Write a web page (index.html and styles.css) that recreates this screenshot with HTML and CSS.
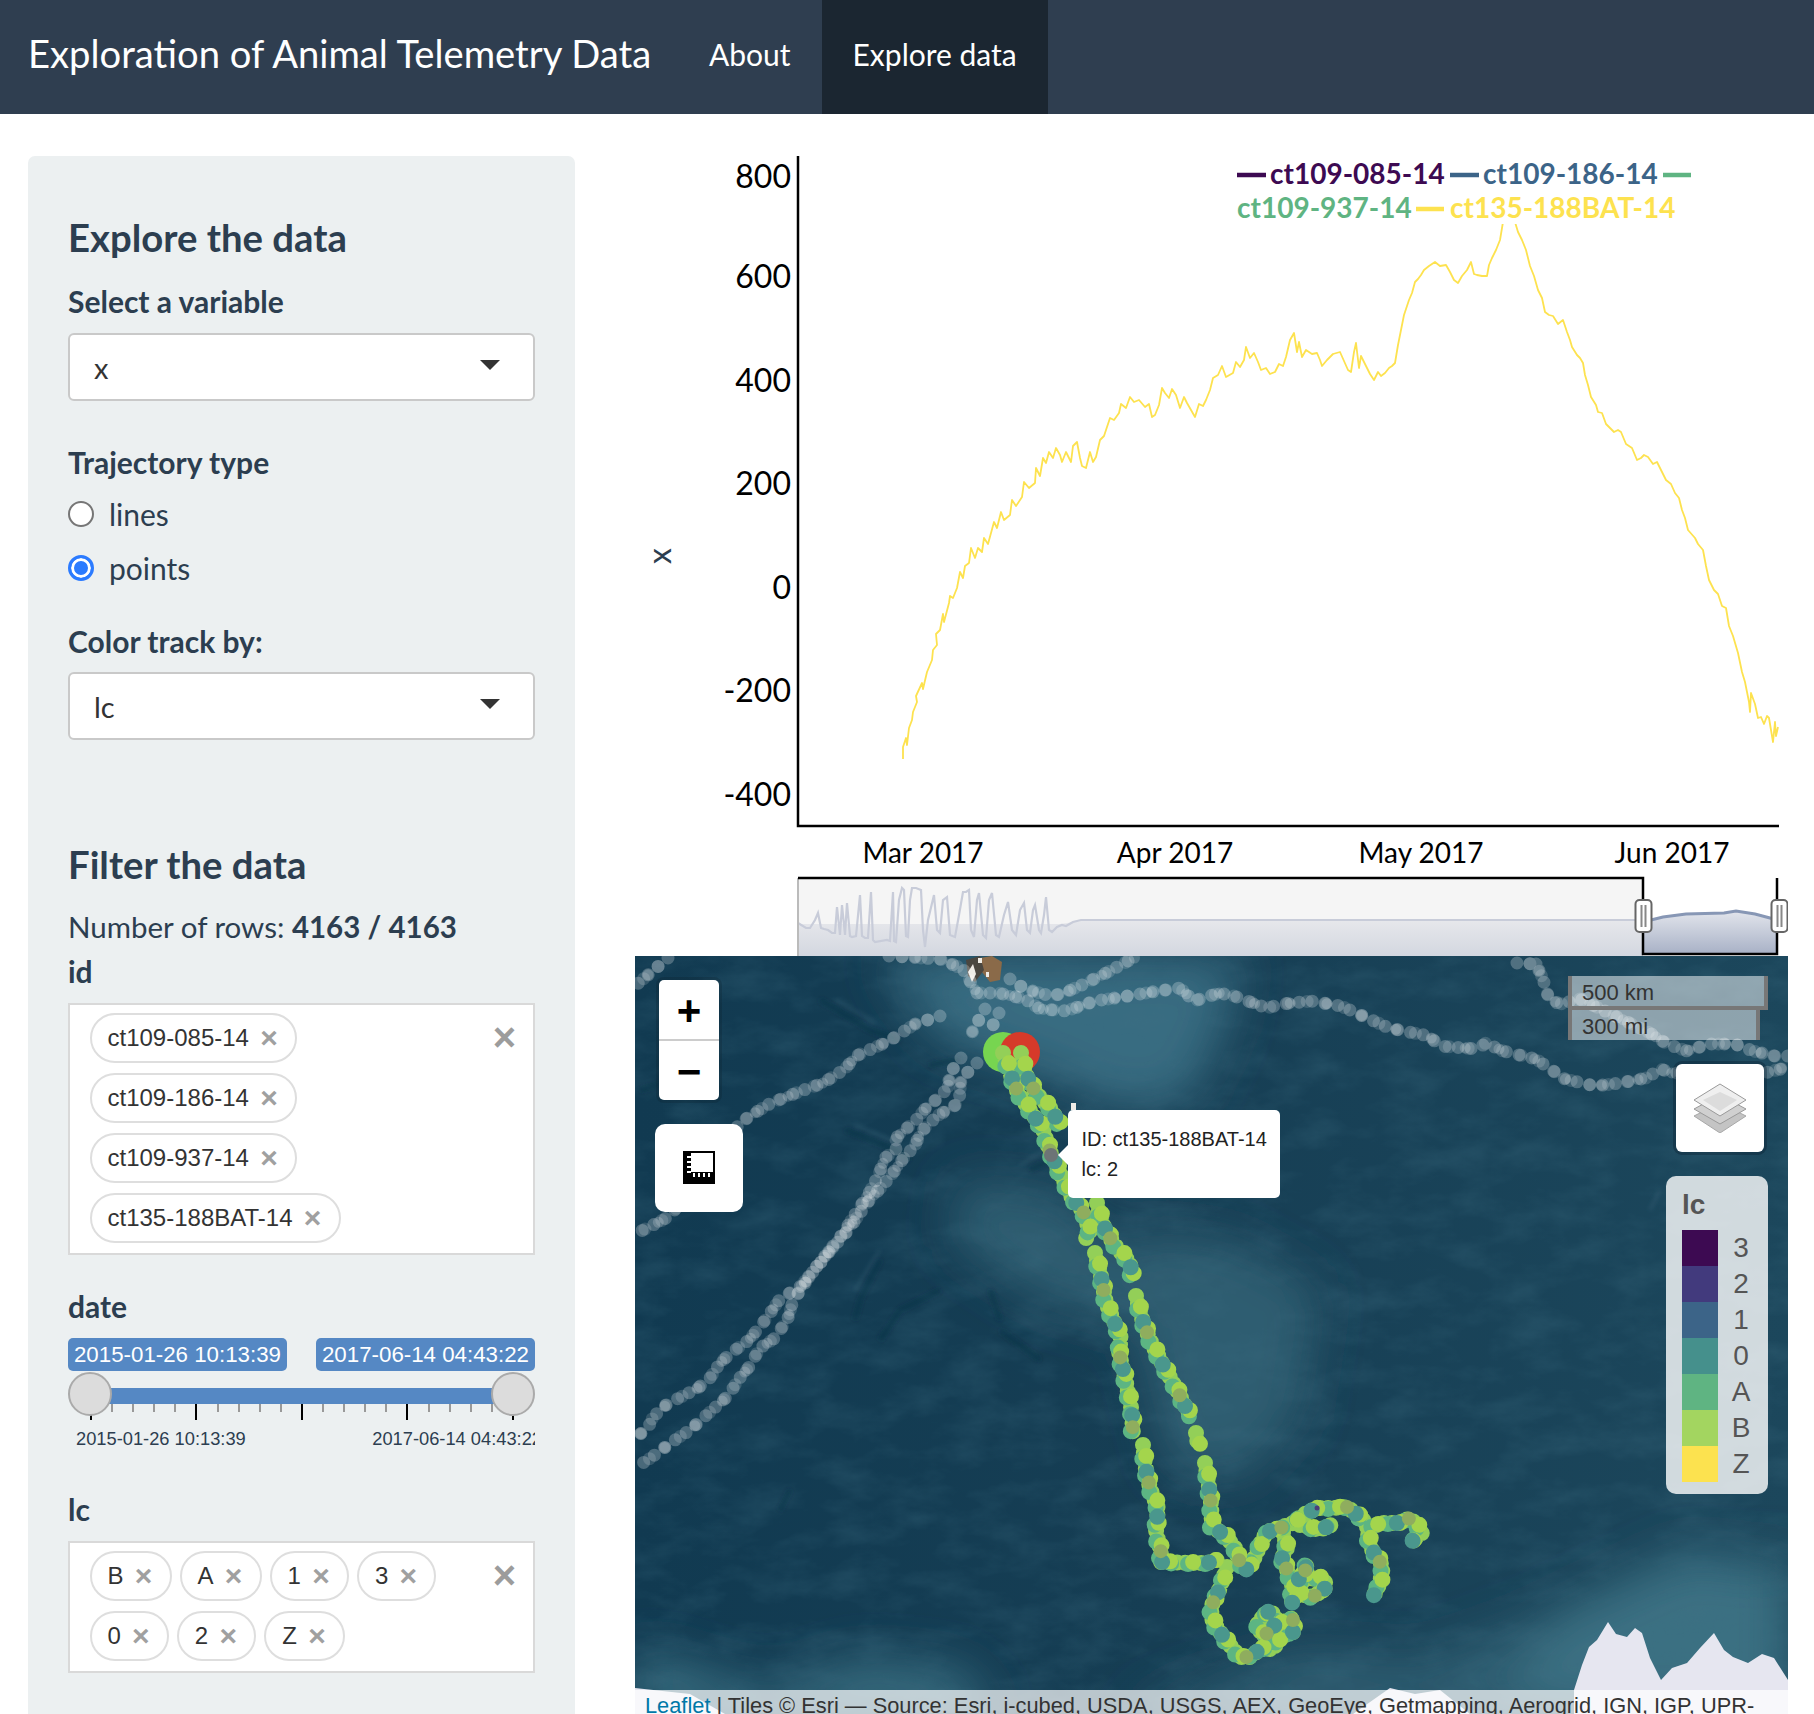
FILE: index.html
```html
<!DOCTYPE html>
<html lang="en">
<head>
<meta charset="utf-8">
<title>Exploration of Animal Telemetry Data</title>
<link rel="stylesheet" href="styles.css">
</head>
<body>
<nav class="navbar">
  <span class="brand">Exploration of Animal Telemetry Data</span>
  <a class="tab">About</a>
  <a class="tab tab-active">Explore data</a>
</nav>
<div class="content">
  <aside class="sidebar">
    <h3 class="heading">Explore the data</h3>
    <label class="label label-select">Select a variable</label>
    <div class="select"><span>x</span><i class="caret"></i></div>
    <label class="label label-traj">Trajectory type</label>
    <div class="radio radio-first"><i class="dot"></i><span>lines</span></div>
    <div class="radio"><i class="dot dot-on"></i><span>points</span></div>
    <label class="label label-color">Color track by:</label>
    <div class="select"><span>lc</span><i class="caret"></i></div>
    <h3 class="heading heading-filter">Filter the data</h3>
    <p class="rows">Number of rows: <b>4163 / 4163</b></p>
    <label class="label label-id">id</label>
    <div class="multi">
      <span class="pill">ct109-085-14<i class="pill-x">×</i></span>
      <span class="pill">ct109-186-14<i class="pill-x">×</i></span>
      <span class="pill">ct109-937-14<i class="pill-x">×</i></span>
      <span class="pill">ct135-188BAT-14<i class="pill-x">×</i></span>
      <i class="clear">×</i>
    </div>
    <label class="label label-date">date</label>
    <div class="slider">
      <div class="bubbles"><span class="bubble">2015-01-26 10:13:39</span><span class="bubble">2017-06-14 04:43:22</span></div>
      <div class="bar"></div>
      <i class="knob knob-left"></i><i class="knob knob-right"></i>
      <div class="ticks">
        <i class="tk tk-major"></i><i class="tk"></i><i class="tk"></i><i class="tk"></i><i class="tk"></i>
        <i class="tk tk-major"></i><i class="tk"></i><i class="tk"></i><i class="tk"></i><i class="tk"></i>
        <i class="tk tk-major"></i><i class="tk"></i><i class="tk"></i><i class="tk"></i><i class="tk"></i>
        <i class="tk tk-major"></i><i class="tk"></i><i class="tk"></i><i class="tk"></i><i class="tk"></i>
        <i class="tk tk-major"></i>
      </div>
      <div class="ends"><span>2015-01-26 10:13:39</span><span>2017-06-14 04:43:22</span></div>
    </div>
    <label class="label label-lc">lc</label>
    <div class="multi">
      <span class="pill">B<i class="pill-x">×</i></span>
      <span class="pill">A<i class="pill-x">×</i></span>
      <span class="pill">1<i class="pill-x">×</i></span>
      <span class="pill">3<i class="pill-x">×</i></span>
      <span class="pill">0<i class="pill-x">×</i></span>
      <span class="pill">2<i class="pill-x">×</i></span>
      <span class="pill">Z<i class="pill-x">×</i></span>
      <i class="clear">×</i>
    </div>
  </aside>

  <main class="main">
    <svg class="chart" viewBox="635 156 1153 800" xmlns="http://www.w3.org/2000/svg">
      <defs>
        <linearGradient id="fillOut" x1="0" y1="0" x2="0" y2="1"><stop offset="0" stop-color="#e6e7eb"/><stop offset="1" stop-color="#d3d7e0"/></linearGradient>
        <linearGradient id="fillIn" x1="0" y1="0" x2="0" y2="1"><stop offset="0" stop-color="#e2e5ec"/><stop offset="1" stop-color="#a8b1c6"/></linearGradient>
      </defs>
      <text class="ttl" transform="translate(671 556) rotate(-90)">x</text>
      <g class="ytick">
        <text x="791" y="188">800</text><text x="791" y="288">600</text><text x="791" y="392">400</text><text x="791" y="495">200</text><text x="791" y="599">0</text><text x="791" y="702">-200</text><text x="791" y="806">-400</text>
      </g>
      <g class="xtick">
        <text x="923" y="863">Mar 2017</text><text x="1175" y="863">Apr 2017</text><text x="1421" y="863">May 2017</text><text x="1672" y="863">Jun 2017</text>
      </g>
      <path class="axis" d="M798 156V826H1779"/>
      <polyline class="line" points="903,759 903,747 906,738 907,745 909,728 912,720 913,712 917,702 916,696 922,683 923,689 927,672 932,660 933,650 937,645 936,634 940,630 943,614 944,622 949,603 950,596 953,598 957,588 960,572 963,578 965,566 969,563 971,548 975,558 978,548 982,552 984,538 988,544 991,533 994,522 997,528 1001,512 1004,520 1010,515 1012,500 1016,506 1022,497 1024,482 1029,488 1035,483 1036,468 1040,476 1043,458 1046,463 1049,452 1053,458 1056,448 1060,455 1062,462 1066,452 1071,462 1073,446 1077,442 1080,458 1082,466 1086,468 1090,452 1093,462 1096,457 1100,440 1104,436 1107,427 1110,418 1114,420 1119,413 1121,404 1126,408 1130,397 1134,402 1139,400 1145,407 1149,404 1152,417 1155,415 1159,405 1162,388 1165,393 1169,398 1172,389 1176,395 1180,408 1184,397 1187,403 1191,410 1195,417 1199,404 1203,406 1206,400 1210,390 1213,378 1218,375 1222,366 1226,377 1233,373 1236,362 1240,367 1244,360 1246,347 1250,358 1254,353 1258,362 1261,370 1266,368 1270,374 1275,372 1279,364 1283,366 1286,357 1290,340 1294,333 1297,352 1299,342 1302,357 1306,350 1312,354 1317,353 1320,360 1322,366 1327,360 1333,354 1340,352 1344,361 1348,370 1351,372 1354,352 1356,343 1359,368 1361,356 1366,366 1370,374 1374,380 1378,372 1381,376 1385,373 1389,368 1392,366 1395,363 1398,345 1401,330 1404,315 1409,300 1412,293 1415,282 1418,279 1421,275 1424,270 1429,266 1435,262 1440,266 1446,265 1450,272 1454,280 1458,283 1462,276 1467,270 1471,262 1474,274 1477,275 1482,276 1487,276 1489,265 1492,258 1496,250 1500,240 1502,228 1503,222 1515,222 1518,232 1522,240 1526,250 1530,266 1534,276 1538,290 1542,298 1545,312 1549,315 1553,316 1558,324 1563,320 1567,332 1570,340 1572,347 1577,355 1580,358 1583,363 1585,375 1588,385 1591,397 1596,405 1598,412 1602,413 1606,424 1610,428 1614,432 1618,430 1621,432 1626,444 1632,448 1637,460 1641,458 1644,455 1648,457 1653,464 1657,462 1660,468 1666,480 1671,484 1675,493 1679,498 1682,510 1685,518 1688,530 1695,538 1698,544 1703,550 1706,566 1709,580 1714,590 1718,594 1722,606 1726,608 1729,626 1733,636 1738,653 1742,672 1745,682 1749,702 1750,712 1751,693 1755,704 1758,718 1761,717 1764,724 1767,716 1769,718 1771,730 1773,742 1775,722 1776,736 1778,727"/>
      <rect class="lgbg" x="1232" y="156" width="470" height="68"/>
      <g class="lg">
        <path class="lg1" d="M1237 175H1266"/><text class="lg1t" x="1270" y="184">ct109-085-14</text>
        <path class="lg2" d="M1450 175H1479"/><text class="lg2t" x="1483" y="184">ct109-186-14</text>
        <path class="lg3" d="M1663 175H1691"/><text class="lg3t" x="1237" y="218">ct109-937-14</text>
        <path class="lg4" d="M1416 209H1444"/><text class="lg4t" x="1450" y="218">ct135-188BAT-14</text>
      </g>
      <rect class="rs-bg" x="798" y="878" width="845" height="78"/>
      <rect class="rs-in" x="1643" y="878" width="134" height="76"/>
      <path class="rs-fill" d="M798 924L1060 924 1081 921H1643V956H798Z"/>
      <path class="rs-line" d="M798 923L806 928 810 928 815 920 818 913 821 928 824 929 828 930 832 933 835 933 837 907 840 935 842 905 845 935 847 903 850 936 852 937 856 936 860 895 862 936 865 938 868 938 871 892 873 940 875 942 887 940 890 941 893 892 894 941 896 942 899 900 902 888 904 890 906 936 908 937 910 900 912 888 916 888 921 890 923 930 925 947 928 920 934 895 937 930 940 933 943 900 947 897 950 935 955 937 959 915 963 892 966 892 969 890 971 930 974 937 977 900 979 893 983 935 986 938 989 900 992 893 996 935 999 937 1004 915 1008 902 1012 930 1016 935 1020 910 1024 903 1027 930 1030 933 1033 910 1035 905 1039 930 1041 933 1044 915 1046 897 1049 930 1052 932 1057 927 1062 925 1066 926 1073 922 1081 920H1643"/>
      <path class="rs-fill2" d="M1643 922L1663 917 1686 914 1724 913 1736 911 1755 914 1770 918 1777 920V954H1643Z"/>
      <path class="rs-line2" d="M1643 922L1663 917 1686 914 1724 913 1736 911 1755 914 1770 918 1777 920"/>
      <path class="rs-edge" d="M798 878V956"/>
      <path class="rs-frame" d="M798 878H1643V954H1777V878"/>
      <g class="handle"><rect x="1635.500" y="900" width="16" height="32" rx="4"/><path d="M1641.500 905V927M1645.500 905V927"/></g>
      <g class="handle"><rect x="1771.500" y="900" width="16" height="32" rx="4"/><path d="M1777.500 905V927M1781.500 905V927"/></g>
    </svg>

    <div class="map">
      <svg class="map-art" viewBox="635 956 1153 758" preserveAspectRatio="none" xmlns="http://www.w3.org/2000/svg">
        <defs>
          <filter id="b30" x="-30%" y="-30%" width="160%" height="160%"><feGaussianBlur stdDeviation="24"/></filter>
          <filter id="b3" x="-30%" y="-30%" width="160%" height="160%"><feGaussianBlur stdDeviation="2"/></filter>
          <filter id="b1" x="-30%" y="-30%" width="160%" height="160%"><feGaussianBlur stdDeviation="0.600"/></filter>
          <filter id="grain" x="0" y="0" width="100%" height="100%">
            <feTurbulence type="fractalNoise" baseFrequency="0.018 0.035" numOctaves="5" seed="11"/>
            <feColorMatrix values="0 0 0 0 0.05  0 0 0 0 0.16  0 0 0 0 0.23  1.400 0 0 0 -0.56"/>
          </filter>
          <linearGradient id="sea" x1="0" y1="0" x2="1" y2="0"><stop offset="0" stop-color="#113a51"/><stop offset="0.45" stop-color="#163e54"/><stop offset="1" stop-color="#1c475c"/></linearGradient>
          <path id="w1" d="M668 958L635 986"/>
          <path id="w2" d="M940 1016L915 1024 889 1041 856 1056 845 1069 823 1083 801 1091 771 1103 753 1114 740 1123 720 1150 690 1190 670 1216 657 1223 635 1234"/>
          <path id="w3" d="M985 1009L970 1036M999 1013L990 1031M977 1063L961 1079 959 1103 937 1116 920 1133 915 1146 905 1156 896 1169 885 1183 867 1203 850 1228 830 1251 812 1273 793 1301 788 1318 775 1338 760 1348 749 1367 738 1380 729 1395 710 1412 690 1430 672 1442 652 1457 635 1468"/>
          <path id="w4" d="M961 1058L950 1073 948 1088 937 1099 926 1108 917 1119 896 1138 896 1149 885 1158 878 1176 869 1193 856 1213 841 1236 821 1261 801 1286 780 1299 766 1319 749 1340 731 1353 720 1363 710 1378 698 1388 675 1400 666 1405 653 1417 648 1428 635 1438"/>
          <path id="w5" d="M889 956L940 959 963 969 977 993 999 993 1025 999 1040 1009 1066 1011 1095 1001 1128 996 1158 991 1180 988 1194 1001 1219 993 1234 996 1267 1008 1282 1004 1311 1001 1341 1006 1363 1016 1389 1028 1429 1036 1440 1046 1477 1049 1486 1043 1503 1051 1536 1059 1565 1079 1595 1086 1620 1083 1646 1078 1661 1069 1672 1073 1764 1073 1781 1069 1788 1059"/>
          <path id="w6" d="M1010 979L1025 989 1051 996 1064 993 1084 984 1106 973 1128 961 1139 956"/>
          <path id="w7" d="M1517 963L1536 964 1543 979 1549 999 1560 1004 1580 999 1609 1013 1650 1033 1667 1044 1687 1051 1709 1044 1735 1044 1753 1051 1775 1056 1789 1056M1536 964L1545 957"/>
          <g id="whites"><use href="#w1"/><use href="#w2"/><use href="#w3"/><use href="#w4"/><use href="#w5"/><use href="#w6"/><use href="#w7"/></g>
          <path id="c1" d="M1003 1053L1010 1073 1018 1093 1029 1109 1043 1129 1049 1149 1058 1169 1071 1196 1084 1213 1090 1233 1084 1241M1095 1253L1101 1276 1106 1303 1113 1319 1121 1338 1119 1352 1125 1378 1132 1412 1133 1435M1143 1445L1145 1465 1150 1488 1158 1508 1156 1532 1161 1552 1161 1562 1191 1563 1207 1563 1217 1560"/>
          <path id="c2" d="M1021 1053L1025 1073 1036 1093 1051 1109 1062 1129M1097 1203L1102 1223 1113 1243 1130 1263 1132 1276M1136 1296L1141 1316 1150 1340 1163 1365 1176 1388 1187 1410 1193 1418M1196 1433L1198 1445M1205 1463L1208 1480 1211 1503 1212 1527 1225 1535 1235 1548 1240 1563 1247 1570 1255 1557 1262 1540 1267 1532 1280 1528 1293 1523 1303 1515 1317 1508 1333 1508 1347 1507 1360 1517 1370 1527 1383 1523 1400 1523 1410 1518 1423 1532 1410 1543"/>
          <path id="c3" d="M1367 1527L1370 1547 1377 1557 1383 1567 1380 1583 1373 1597M1283 1533L1287 1548 1282 1558 1287 1570 1292 1583 1292 1603 1303 1580 1307 1563 1303 1580 1323 1577 1327 1587 1313 1597 1295 1593 1300 1575M1300 1525L1320 1530 1333 1524M1227 1567L1220 1588 1212 1605 1211 1617 1217 1628 1228 1643 1240 1657 1250 1657 1263 1647 1273 1650 1280 1637 1293 1632 1293 1618 1280 1623 1270 1610 1257 1623 1263 1637 1275 1625 1268 1640"/>
          <g id="colors"><use href="#c1"/><use href="#c2"/><use href="#c3"/></g>
        </defs>
        <rect class="sea" x="635" y="956" width="1153" height="758"/>
        <g filter="url(#b30)">
          <path class="shoal" d="M880 956L1240 956 1225 1030 1190 1100 1120 1110 1030 1070 940 1040Z"/>
          <path class="shoal2" d="M960 1180L1060 1190 1130 1260 1140 1330 1040 1300 950 1240Z"/>
          <path class="shoal2" d="M1130 1230L1230 1240 1320 1290 1300 1420 1240 1480 1170 1470 1140 1350Z"/>
          <path class="shoal3" d="M635 1650L770 1690 860 1660 960 1670 1000 1714H635Z"/>
          <path class="shoal2" d="M1120 1714L1300 1650 1420 1660 1560 1610 1700 1580 1788 1550V1714Z"/>
          <path class="shoal3" d="M1500 1714L1560 1610 1690 1550 1788 1570V1714Z"/>
        </g>
        <rect class="grain" filter="url(#grain)" x="635" y="956" width="1153" height="758"/>
        <g class="ridges" filter="url(#b3)">
          <path d="M820 1000L870 1030 900 1040M846 1130L895 1150 910 1160M960 1060L930 1065M1030 1170L1050 1160M880 1260L860 1300 855 1320M940 1290L900 1310 880 1340M640 1090L690 1075M990 1290L1000 1320M1000 1330L1040 1360M790 1490L780 1510"/>
        </g>
        <g class="ridges-l" filter="url(#b3)">
          <path d="M835 1000L875 1022M855 1125L895 1142M1020 1165L1045 1150M880 1250L855 1290M1660 1190L1650 1210"/>
        </g>
        <g filter="url(#b1)">
          <path class="isle-b" d="M980 958L992 956 1002 962 1000 980 990 982 982 972Z"/>
          <path class="isle-d" d="M966 960L980 956 984 970 975 982 968 976Z"/>
          <path class="isle-w" d="M968 972L973 964 976 974 972 982Z"/>
          <path class="isle-w" d="M978 958h4v5h-4zM986 972h3v5h-3z"/>
          <path class="isle-w" d="M1071 1103h5v7h-5z"/>
        </g>
        <path class="land" d="M1574 1714V1690L1582 1665 1589 1647 1597 1640 1608 1622 1616 1634 1627 1637 1635 1628 1642 1633 1650 1658 1661 1680 1672 1668 1687 1663 1700 1648 1714 1633 1724 1650 1733 1657 1748 1663 1762 1654 1774 1658 1788 1680V1714Z"/>
        <path class="land" d="M635 1688L690 1694 725 1714H635ZM1353 1714L1390 1688 1415 1694 1440 1690 1470 1714Z"/>
        <g class="wt wt-a"><use href="#whites"/></g>
        <g class="wt wt-b"><use href="#whites"/></g>
        <g class="wt wt-c"><use href="#whites"/></g>
        <circle class="m-green" cx="1003" cy="1052" r="20"/>
        <circle class="m-red" cx="1020" cy="1052" r="20"/>
        <g class="ct ct-base"><use href="#colors"/></g>
        <g class="ct ct-teal"><use href="#colors"/></g>
        <g class="ct ct-lime"><use href="#colors"/></g>
        <g class="ct ct-deep"><use href="#colors"/></g>
        <g class="ct ct-olive"><use href="#colors"/></g>
        <g class="ct ct-purple"><use href="#c2"/></g>
        <circle class="m-hover" cx="1051" cy="1155" r="7"/>
      </svg>

      <div class="zoom"><span class="zoom-btn">+</span><span class="zoom-btn zoom-minus">−</span></div>
      <div class="measure">
        <svg class="measure-icon" viewBox="0 0 32 33" xmlns="http://www.w3.org/2000/svg">
          <path class="mi-solid" d="M0 0H8V21H32V33H0Z"/>
          <path class="mi-thin" d="M8 1H31V22"/>
          <path class="mi-tick" d="M4 6H8M4 11H8M4 16H8M4 21H8M11 26V22M16 26V22M21 26V22M26 26V22"/>
        </svg>
      </div>
      <div class="tip"><div>ID: ct135-188BAT-14</div><div>lc: 2</div></div>
      <div class="scale"><div class="scale-km">500 km</div><div class="scale-mi">300 mi</div></div>
      <div class="layers">
        <svg class="layers-icon" viewBox="0 0 54 50" xmlns="http://www.w3.org/2000/svg">
          <path class="ly3" d="M27 20L53 33 27 50 1 33Z"/>
          <path class="ly2" d="M27 12L53 26 27 41 1 26Z"/>
          <path class="ly1" d="M27 1L53 17 27 33 1 17Z"/>
          <path class="ly0" d="M27 9L44 17 27 28 10 17Z"/>
        </svg>
      </div>
      <div class="legend">
        <div class="legend-title">lc</div>
        <div class="legend-row"><i class="sw sw1"></i><span>3</span></div>
        <div class="legend-row"><i class="sw sw2"></i><span>2</span></div>
        <div class="legend-row"><i class="sw sw3"></i><span>1</span></div>
        <div class="legend-row"><i class="sw sw4"></i><span>0</span></div>
        <div class="legend-row"><i class="sw sw5"></i><span>A</span></div>
        <div class="legend-row"><i class="sw sw6"></i><span>B</span></div>
        <div class="legend-row"><i class="sw sw7"></i><span>Z</span></div>
      </div>
      <div class="attrib"><a>Leaflet</a> | Tiles © Esri — Source: Esri, i-cubed, USDA, USGS, AEX, GeoEye, Getmapping, Aerogrid, IGN, IGP, UPR-EGP, and the GIS User Community</div>
    </div>
  </main>
</div>
</body>
</html>
```

FILE: styles.css
```css
* { box-sizing: border-box; }
html, body { margin: 0; height: 1714px; overflow: hidden; background: #fff; }
body { font-family: Lato, "Liberation Sans", sans-serif; color: #2c3e50; font-size: 30px; }
i { font-style: normal; }

.navbar { height: 114px; background: #2f3e50; color: #fff; display: flex; align-items: stretch; padding-left: 28px; }
.brand { font-size: 38.200px; line-height: 106px; width: 650px; white-space: nowrap; }
.tab { font-size: 30px; line-height: 109px; padding: 0 31px; }
.tab-active { background: #1b2631; }

.content { display: flex; height: 1600px; }
.sidebar { width: 547px; margin: 42px 0 0 28px; padding: 59px 40px 0; height: 1600px; background: #ecf0f1; border-radius: 7px 7px 0 0; }
.main { width: 1153px; margin: 42px 0 0 60px; display: flex; flex-direction: column; }

.heading { margin: 0; font-size: 38.300px; line-height: 44px; font-weight: 700; }
.heading-filter { margin-top: 102px; }
.label { display: block; font-size: 30px; line-height: 36px; font-weight: 700; }
.label-select { margin: 24px 0 14px; }
.label-traj { margin: 43px 0 16px; }
.label-color { margin: 37px 0 13px; }
.label-id { margin: 8px 0 14px; }
.label-date { margin: 33px 0 14px; }
.label-lc { margin: 40px 0 14px; }

.select { height: 68px; background: #fff; border: 2.500px solid #c9c9c9; border-radius: 6px; padding: 0 0 0 24px; display: flex; align-items: center; justify-content: space-between; color: #333; font-size: 29px; }
.caret { width: 0; height: 0; margin: -5px 33px 0 0; border-left: 10px solid transparent; border-right: 10px solid transparent; border-top: 10px solid #333; }

.radio { display: flex; align-items: center; height: 36px; margin-top: 18px; }
.radio-first { margin-top: 0; }
.dot { width: 26px; height: 26px; border-radius: 50%; background: #fff; border: 2px solid #767676; margin-right: 15px; }
.dot-on { border: 3px solid #2b7bff; box-shadow: inset 0 0 0 3px #fff; background: #2b7bff; }

.rows { margin: 23px 0 0; font-size: 29.500px; line-height: 36px; }

.multi { position: relative; display: flex; flex-wrap: wrap; gap: 10px 8px; background: #fff; border: 2.500px solid #d9d9d9; padding: 8px 80px 10px 19.500px; font-family: "Liberation Sans", Arial, sans-serif; font-size: 24px; color: #333; }
.pill { height: 50px; display: inline-flex; align-items: center; border: 2.500px solid #dedede; border-radius: 25px; padding: 0 6px 0 16px; background: #fff; white-space: nowrap; }
.pill-x { width: 40px; text-align: center; color: #a0a0a0; font-size: 30px; font-weight: 700; line-height: 1; }
.clear { position: absolute; top: 12px; right: 17px; color: #9c9c9c; font-size: 40px; font-weight: 700; line-height: 40px; }

.slider { position: relative; height: 113px; font-family: "Liberation Sans", Arial, sans-serif; }
.bubbles { display: flex; justify-content: space-between; }
.bubble { height: 33px; width: 219px; text-align: center; background: #5588c4; color: #fff; border-radius: 5px; font-size: 22.300px; line-height: 33px; white-space: nowrap; }
.bar { height: 16px; margin: 17px 22px 0; background: #5588c4; }
.knob { position: absolute; top: 34px; width: 44px; height: 44px; border-radius: 50%; background: #dcdcdc; border: 2.500px solid #aaa; }
.knob-left { left: 0; }
.knob-right { right: 0; }
.ticks { display: flex; justify-content: space-between; align-items: flex-start; margin: 0 21px 0 22px; }
.tk { width: 2px; height: 8px; background: #999; }
.tk-major { height: 16px; background: #000; }
.ends { display: flex; justify-content: space-between; overflow: hidden; margin-top: 7px; padding-left: 8px; font-size: 18.300px; line-height: 24px; white-space: nowrap; }
.ends span + span { margin-right: -7px; }

.chart { display: block; width: 1153px; height: 800px; flex: none; font-family: Lato, sans-serif; }
.ttl { font-size: 32px; fill: #2c3e50; text-anchor: middle; }
.ytick text { font-size: 32px; text-anchor: end; fill: #000; }
.xtick text { font-size: 28px; text-anchor: middle; fill: #000; }
.axis { fill: none; stroke: #000; stroke-width: 2.500px; }
.line { fill: none; stroke: #fde24f; stroke-width: 1.800px; stroke-linejoin: round; }
.lgbg { fill: #fff; }
.lg text { font-size: 28px; font-weight: 700; }
.lg path { stroke-width: 4.500px; fill: none; }
.lg1 { stroke: #3d0a52; }
.lg1t { fill: #3d0a52; }
.lg2 { stroke: #3c6488; }
.lg2t { fill: #3c6488; }
.lg3 { stroke: #5fb482; }
.lg3t { fill: #5fb482; }
.lg4 { stroke: #fde24f; }
.lg4t { fill: #fde24f; }
.rs-bg { fill: #f5f5f5; }
.rs-in { fill: #fff; }
.rs-fill { fill: url(#fillOut); }
.rs-line { fill: none; stroke: #c8ccd9; stroke-width: 2.200px; }
.rs-fill2 { fill: url(#fillIn); }
.rs-line2 { fill: none; stroke: #8797b5; stroke-width: 3px; }
.rs-edge { stroke: #bbb; stroke-width: 2px; }
.rs-frame { fill: none; stroke: #000; stroke-width: 2.500px; }
.handle rect { fill: #fff; stroke: #666; stroke-width: 2px; }
.handle path { stroke: #888; stroke-width: 2px; }

.map { position: relative; height: 758px; flex: none; overflow: hidden; background: #173f55; font-family: "Liberation Sans", Arial, sans-serif; }
.map-art { position: absolute; inset: 0; width: 100%; height: 100%; display: block; }
.sea { fill: url(#sea); }
.shoal { fill: #386c81; }
.shoal2 { fill: #2d5d71; }
.shoal3 { fill: #3a7082; }
.grain { fill: #000; opacity: .4; }
.ridges path { fill: none; stroke: #0c2c40; stroke-width: 5px; opacity: .4; }
.ridges-l path { fill: none; stroke: #5d8d9f; stroke-width: 3px; opacity: .2; }
.isle-w { fill: #efece6; }
.isle-b { fill: #8a6a48; }
.isle-d { fill: #4c4640; }
.land { fill: #e6e6f0; }
.wt { fill: none; stroke-linecap: round; stroke-linejoin: round; }
.wt-a { stroke: rgba(255,255,255,.24); stroke-width: 13px; stroke-dasharray: 0 13; }
.wt-b { stroke: rgba(255,255,255,.15); stroke-width: 13px; stroke-dasharray: 0 19; stroke-dashoffset: 6; }
.wt-c { stroke: rgba(255,255,255,.18); stroke-width: 11px; stroke-dasharray: 0 37; stroke-dashoffset: 11; }
.m-green { fill: #77d550; }
.m-red { fill: #d63a2a; }
.m-hover { fill: #6d7476; }
.ct { fill: none; stroke-linecap: round; stroke-linejoin: round; stroke-width: 16px; }
.ct-base { stroke: #93cf58; stroke-dasharray: 0 8; }
.ct-teal { stroke: #5cb583; stroke-dasharray: 0 17; stroke-dashoffset: 4; transform: translate(-2px, 1px); }
.ct-lime { stroke: #a4d54c; stroke-dasharray: 0 23; stroke-dashoffset: 11; transform: translate(2px, -1px); }
.ct-deep { stroke: #4a978d; stroke-dasharray: 0 47; stroke-dashoffset: 20; }
.ct-olive { stroke: #8fad5e; stroke-dasharray: 0 71; stroke-dashoffset: 33; stroke-width: 14px; }
.ct-purple { stroke: #4a3d7a; stroke-dasharray: 0 311; stroke-dashoffset: 90; stroke-width: 5px; }

.zoom { position: absolute; left: 24px; top: 24px; width: 60px; height: 120px; background: #fff; border-radius: 5px; box-shadow: 0 0 0 3px rgba(10,30,45,.25); display: flex; flex-direction: column; }
.zoom-btn { flex: 1; display: flex; align-items: center; justify-content: center; font-size: 42px; font-weight: 700; color: #000; line-height: 1; padding-top: 2px; }
.zoom-minus { border-top: 2px solid #ccc; }
.measure { position: absolute; left: 20px; top: 168px; width: 88px; height: 88px; background: #fff; border-radius: 10px; display: flex; justify-content: center; padding-top: 27px; }
.measure-icon { width: 32px; height: 33px; }
.mi-solid { fill: #000; }
.mi-thin { fill: none; stroke: #000; stroke-width: 2px; }
.mi-tick { fill: none; stroke: #fff; stroke-width: 2px; }
.tip { position: absolute; left: 432.500px; top: 154px; width: 212px; height: 88px; background: #fff; border-radius: 5px; padding: 14px 0 14px 14px; font-size: 20px; line-height: 30px; color: #222; white-space: nowrap; }
.tip::before { content: ""; position: absolute; left: -10px; top: 34px; width: 0; height: 0; border-top: 11px solid transparent; border-bottom: 11px solid transparent; border-right: 11px solid #fff; }
.scale { position: absolute; left: 933px; top: 20px; color: #333; font-size: 22px; line-height: 26px; }
.scale-km { width: 200px; height: 34px; padding: 4px 0 0 10px; border: 4px solid #777; border-top: 0; background: rgba(255,255,255,.5); }
.scale-mi { width: 192px; height: 30px; padding: 4px 0 0 10px; border: 4px solid #777; border-top: 0; border-bottom: 0; background: rgba(255,255,255,.5); }
.layers { position: absolute; left: 1041px; top: 108px; width: 88px; height: 88px; background: #fff; border-radius: 6px; box-shadow: 0 0 0 3px rgba(10,30,45,.35); display: flex; align-items: center; justify-content: center; }
.layers-icon { width: 54px; height: 50px; }
.ly3 { fill: #c4c4c4; stroke: #a8a8a8; stroke-width: 1px; }
.ly2 { fill: #d0d0d0; stroke: #9a9a9a; stroke-width: 1px; }
.ly1 { fill: #efefef; stroke: #9a9a9a; stroke-width: 1px; }
.ly0 { fill: #dcdcdc; }
.legend { position: absolute; left: 1031px; top: 220px; width: 102px; height: 318px; padding: 14px 16px; border-radius: 10px; background: rgba(255,255,255,.8); color: #555; font-size: 28px; }
.legend-title { font-weight: 700; font-size: 28px; line-height: 30px; margin-bottom: 10px; }
.legend-row { display: flex; height: 36px; align-items: center; line-height: 36px; }
.legend-row span { flex: 1; text-align: center; margin-left: 12px; }
.sw { width: 36px; height: 36px; flex: none; }
.sw1 { background: #3d0a52; }
.sw2 { background: #423a7d; }
.sw3 { background: #3c6488; }
.sw4 { background: #45908c; }
.sw5 { background: #5fb482; }
.sw6 { background: #a3d560; }
.sw7 { background: #fce24f; }
.attrib { position: absolute; left: 0; right: 0; top: 734px; height: 60px; padding: 0 10px; background: rgba(255,255,255,.7); color: #333; font-size: 21.800px; line-height: 32px; }
.attrib a { color: #0078a8; }
```
